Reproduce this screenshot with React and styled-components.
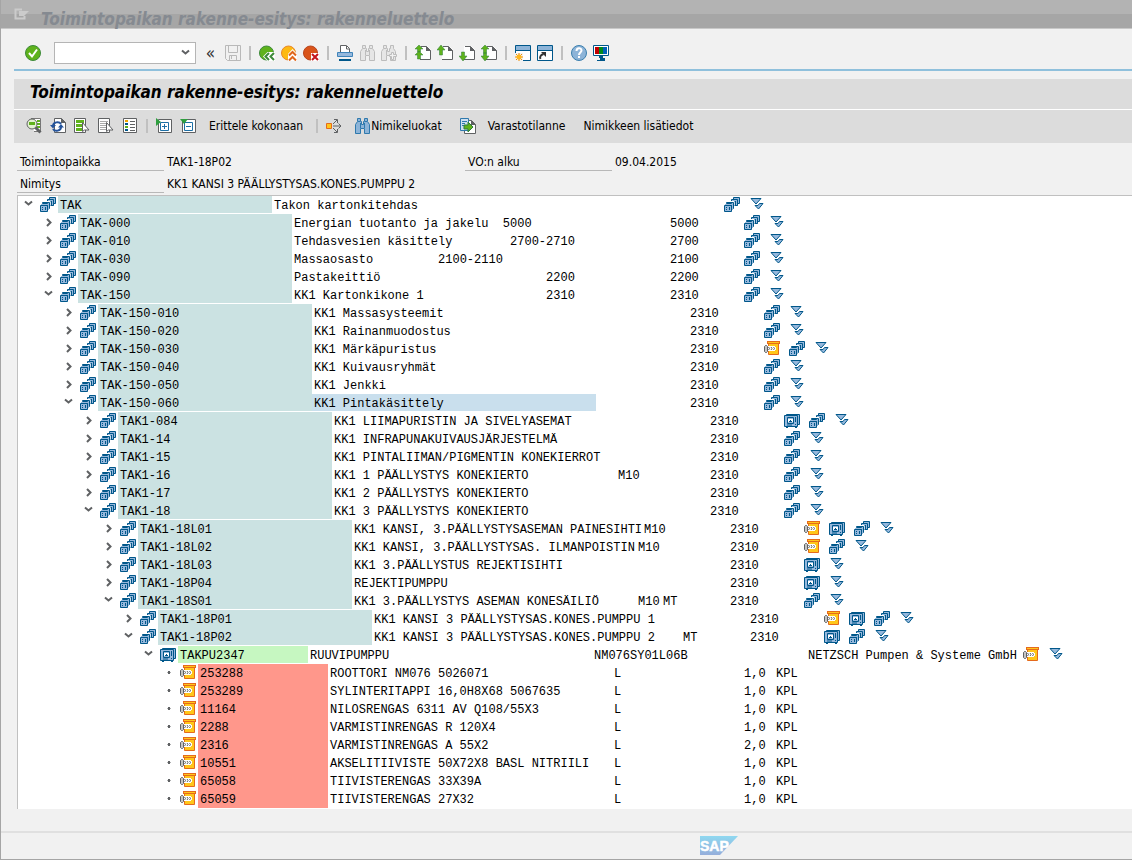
import React from 'react'
import styled, { createGlobalStyle, css } from 'styled-components'

const GlobalStyle = createGlobalStyle`
    * {
        box-sizing: border-box;
    }

    body {
        margin: 0;
        background-color: #f1f1f1;
        color: #000;
        font-family: "DejaVu Sans Condensed", Tahoma, sans-serif;
        font-size: 12px;
    }

    button, input {
        font: inherit;
        color: inherit;
    }

    svg {
        display: block;
        flex: none;
    }
`

const BLUE = '#00578a'
const LIGHT = '#96b8dc'
const GREEN = '#5fb21c'
const GREY = '#5f6163'

/* ---------- icons ---------- */

const Svg = ({ w = 16, h = 16, children }) => (
    <svg width={w} height={h} viewBox={`0 0 ${w} ${h}`} fill="none" aria-hidden="true">
        {children}
    </svg>
)

const Location = () => (
    <Svg h={15}>
        <path d="M9.5 .5h6v6h-6z" fill={LIGHT} stroke={BLUE} />
        <path d="M8 2h6v7H8z" fill={LIGHT} />
        <path d="M7.5 8.5v-6h6v6z" fill={LIGHT} stroke={BLUE} />
        <path d="M10 4.500h2M11.500 5v3" stroke={BLUE} />
        <path d="M3 4h7.500v7H3z" fill="#fff" />
        <path d="M2.500 6.500v-1h7v6h-2v-5z" fill={LIGHT} stroke={BLUE} />
        <path d="M1 7.500h7M8.500 7v6" stroke={LIGHT} />
        <path d="M.5 8.5h7v6h-7z" fill={LIGHT} stroke={BLUE} />
        <path d="M2 10h1v1H2zM2 12h1v1H2zM5 10h1v3H5z" fill={BLUE} />
    </Svg>
)

const Equipment = () => (
    <Svg h={15}>
        <path d="M2 14h2v1H2zM11 14h2v1h-2z" fill={BLUE} />
        <path d="M2.500 2.500v-1h13v10h-2" fill={LIGHT} stroke={BLUE} />
        <path d="M.5 2.500h13v11H.5z" fill={LIGHT} stroke={BLUE} />
        <path d="M3.500 4.500h6v6h-6z" fill={LIGHT} stroke={BLUE} />
        <path d="M4 6h5v3H4z" fill="#fff" />
        <path d="M6 7h1v1H6zM5 8h3v1H5z" fill={BLUE} />
        <path d="M11.500 4v5M11 11.500h1M3 12h5" stroke={BLUE} />
    </Svg>
)

const Material = () => (
    <Svg h={14}>
        <path d="M4.500 1.500h10v12h-10z" fill="#ffc61a" stroke="#e56a1c" />
        <path d="M3 0h13v3H3z" fill="#e56a1c" />
        <path d="M4 1h11v1H4z" fill="#ffc61a" />
        <path d="M2 5h9v1h1v3h-1v1H2z" fill="#fff" />
        <path d="M1.500 4.500h1l1 1v5l-1 1h-1l-1-1v-5z" fill="#c4c4c4" stroke={GREY} />
        <path d="M4.500 6l1 1.500-1 1.500M7 6l1 1.500L7 9M9.500 6l1 1.500-1 1.500" stroke={GREY} />
    </Svg>
)

const Expand = () => (
    <Svg w={14} h={14}>
        <path d="M13 6.500H9.500L8 8.500H5L8.500 12z" fill={LIGHT} stroke={BLUE} />
        <path d="M1 1.500h10L6 7z" fill={LIGHT} stroke={BLUE} />
    </Svg>
)

const ArrowRight = () => (
    <Svg w={9} h={9}>
        <path d="M3 1l3.500 3.500L3 8" stroke={GREY} strokeWidth="2" />
    </Svg>
)

const ArrowDown = () => (
    <Svg w={9} h={9}>
        <path d="M1 1.500l3.500 3L8 1.500" stroke={GREY} strokeWidth="2" />
    </Svg>
)

const Dot = () => (
    <Svg w={9} h={9}>
        <path d="M4 3h2v3H4zM3.500 4h3v1h-3z" fill={GREY} />
    </Svg>
)

const Enter = () => (
    <Svg>
        <circle cx="8" cy="8" r="7.500" fill={GREEN} stroke="#3d8a3a" />
        <path d="M4 8l3 3.500L12 4.500" stroke="#fff" strokeWidth="2" />
    </Svg>
)

const Save = () => (
    <Svg>
        <path d="M.5 .5h15v15h-13l-2-2z" stroke="#b9b9b9" />
        <path d="M3.500 1v6.500h9V1M4.500 15v-4.500h7V15M6.500 11v3" stroke="#b9b9b9" />
    </Svg>
)

const Back = () => (
    <Svg>
        <circle cx="7.500" cy="8" r="7" fill={GREEN} stroke="#3d8a3a" />
        <path d="M4 11.500L8.500 7H16v9H8.500z" fill="#fff" />
        <path d="M10 8l-3.500 3.500L10 15M15 8l-3.500 3.500L15 15" stroke="#3d8a3a" strokeWidth="2" />
    </Svg>
)

const Exit = () => (
    <Svg>
        <circle cx="7.500" cy="8" r="7" fill="#fdb913" stroke="#e8862a" />
        <path d="M7 9l4.500-5L16 9v7H7z" fill="#fff" />
        <path d="M8 10.500l3.500-3.500 3.500 3.500M8 15.500l3.500-3.500 3.500 3.500" stroke="#e0651b" strokeWidth="2" />
    </Svg>
)

const Cancel = () => (
    <Svg>
        <circle cx="7.500" cy="8" r="7" fill="#d9541a" stroke="#b8441c" />
        <path d="M8 8h8v8H8z" fill="#fff" />
        <path d="M9 9l6 6M15 9l-6 6" stroke="#c4161c" strokeWidth="2" />
    </Svg>
)

const Print = () => (
    <Svg>
        <path d="M3.500 7V.5h6l3 3V7" fill="#fff" stroke={GREY} />
        <path d="M9.500 1v3H12" stroke={GREY} />
        <path d="M.5 7.500h15v4H.5z" fill={LIGHT} stroke="#3f84ba" />
        <path d="M2 14h12v2H2z" fill={BLUE} />
    </Svg>
)

const Find = ({ line = '#bcbcbc', fill = '#e6e6e6' }) => (
    <Svg w={15}>
        <path d="M2.500 .5h3v3h1v3h2v-3h1v-3h3v3l2 3v9h-5v-5h-4v5h-5v-9l2-3z" fill={fill} stroke={line} />
        <path d="M5.500 5v5M9.500 5v5M3 3.500h2M10 3.500h2" stroke={line} />
    </Svg>
)

const FindNext = () => (
    <Svg>
        <path d="M2.500 .5h3v3h1v3h2v-3h1v-3h3v3l2 3v9h-5v-5h-4v5h-5v-9l2-3z" fill="#e6e6e6" stroke="#bcbcbc" />
        <path d="M5.500 5v5M3 3.500h2" stroke="#bcbcbc" />
        <path d="M10.500 7.500h2v2h3v2h-3v3h-2v-3h-2v-2h2z" fill="#f1f1f1" stroke="#bcbcbc" />
    </Svg>
)

const arrows = {
    first: 'M4 0l4 4H5.500v3h-3V4H0zM4 6l4 4H5.500v4h-3v-4H0z',
    prev: 'M4 0l4 5H5.500v5h-3V5H0z',
    next: 'M2.500 7h3v4H8l-4 5-4-5h2.500z',
    last: 'M4 0l4 4H5.500v4h-3V4H0zM2.500 8h3v3H8l-4 5-4-5h2.500z',
}

const PageArrow = ({ kind }) => (
    <Svg>
        <path d="M5 1h7l4 4v10H5z" fill="#fff" />
        <path d="M6 1.500h5.500l4 4v9H5" stroke={GREY} />
        <path d="M11 1v5h5z" fill={GREY} />
        <path d={arrows[kind]} fill={GREEN} stroke="#2e7d3c" strokeWidth=".5" />
    </Svg>
)

const NewSession = () => (
    <Svg>
        <path d="M.5 .5h15v15H.5z" fill="#fff" stroke={BLUE} />
        <path d="M1 1h14v4H1z" fill="#8db4d8" />
        <path d="M0 5h16v1H0z" fill={BLUE} />
        <path d="M0 8h8v8H0z" fill="#f1f1f1" />
        <path d="M4 8v8M0 12h8M1 9l6 6M7 9l-6 6" stroke="#f08c00" />
        <circle cx="4" cy="12" r="2.500" fill="#ffb81c" />
    </Svg>
)

const Shortcut = () => (
    <Svg>
        <path d="M.5 .5h15v15H.5z" fill="#fff" stroke={BLUE} />
        <path d="M1 1h14v4H1z" fill="#8db4d8" />
        <path d="M0 5h16v1H0z" fill={BLUE} />
        <path d="M3.500 14c-1-2 0-4 3-5" stroke="#333" strokeWidth="2" />
        <path d="M4 7h5v5z" fill="#333" />
    </Svg>
)

const Help = () => (
    <Svg>
        <circle cx="8" cy="8" r="7.500" fill="#8db4d8" stroke="#3b7fae" />
        <path d="M5.500 6c0-3.500 5-3.500 5-.5C10.500 7.500 8 7.500 8 10" stroke="#fff" strokeWidth="2" />
        <path d="M7 11h2v2H7z" fill="#fff" />
    </Svg>
)

const Monitor = () => (
    <Svg>
        <path d="M.5 .5h15v10H.5z" fill="#fff" stroke={BLUE} />
        <path d="M2 2h4v7H2z" fill="#c00000" />
        <path d="M6 2h4v7H6z" fill="#008a1e" />
        <path d="M10 2h4v7h-4z" fill="#0060b8" />
        <path d="M6 11h4v2h2v3H4v-1h3v-2H6z" fill={BLUE} />
    </Svg>
)

const Detail = () => (
    <Svg>
        <path d="M5 .5h9.500v13H8" fill="#fff" stroke="#777" />
        <path d="M11 3h3M11 6h3M11 9h3" stroke={GREEN} strokeWidth="2" />
        <circle cx="6" cy="6" r="5" fill="#e4f2d2" stroke={GREY} />
        <path d="M3 4h6v3H3z" fill={GREEN} />
        <path d="M9.500 9.500l5 5" stroke={GREY} strokeWidth="3" />
    </Svg>
)

const Refresh = () => (
    <Svg>
        <path d="M4.500 .5h7l4 4v10h-11z" fill="#fff" stroke={GREY} />
        <path d="M11 0v5h5z" fill={GREY} />
        <path d="M3 8c0-4 6-5 8-2M11 9c0 4-6 5-8 2" stroke="#24539b" strokeWidth="2" />
        <path d="M0 7h6L3 10.500zM8 9.500L11 6l3 3.500z" fill="#24539b" />
    </Svg>
)

const SelectAll = ({ on }) => (
    <Svg>
        <path d="M.5 .5h11v14H.5z" fill="#fff" stroke={GREY} />
        <path d="M2 3.500h8M2 7.500h6M2 11.500h6" stroke={on ? GREEN : '#aaa'} strokeWidth={on ? 3 : 1} />
        {!on && <path d="M2 5.500h8M2 9.500h6" stroke="#aaa" />}
        <path d="M8.500 4.500v9l2-1.500h4.500z" fill="#fff" stroke={GREY} />
    </Svg>
)

const Legend = () => (
    <Svg>
        <path d="M1.500 .5h13v14h-13z" fill="#fff" stroke={GREY} />
        <path d="M3 2h3v2H3z" fill="#f0a500" />
        <path d="M3 5h3v2H3z" fill={BLUE} />
        <path d="M3 8h3v2H3z" fill={GREEN} />
        <path d="M3 11h3v2H3z" fill={BLUE} />
        <path d="M8 3.500h5M8 6.500h5M8 9.500h5M8 12.500h5" stroke={GREY} />
    </Svg>
)

const TreeToggle = ({ open }) => (
    <Svg>
        <path d="M2.500 1.500h13v13h-13z" fill="#fff" stroke={GREY} />
        <path d="M4.500 4.500h8v8h-8z" fill="#fff" stroke="#1d6fa5" />
        <path d={open ? 'M6 8.500h5M8.500 6v5' : 'M6 8.500h5'} stroke="#1d6fa5" />
        <path d={open ? 'M0 0l5 4-5 4z' : 'M0 1h8L4 6z'} fill="#2f9e3f" />
    </Svg>
)

const WhereUsed = () => (
    <Svg>
        <path d="M.5 5.500h5v5h-5z" fill="#ffc61a" stroke="#e56a1c" />
        <path d="M7 8h8M12.500 5.500L15 8l-2.500 2.500M7 6l4-4M8 1.500h3.500V5M7 10l4 4M8 14.500h3.500V11" stroke={GREY} />
    </Svg>
)

const Transfer = () => (
    <Svg>
        <path d="M4.500 2.500h7l4 4v9h-11z" fill="#fff" stroke={GREY} />
        <path d="M11 2v5h5z" fill={GREY} />
        <path d="M.5 .5h8v12h-8z" fill="#cfe0f0" stroke="#2f79ad" />
        <path d="M2 3.500h5M2 5.500h3M2 7.500h2" stroke="#2f79ad" />
        <path d="M4 7h4V4l5 5-5 5v-3H4z" fill={GREEN} stroke="#2e7d3c" />
    </Svg>
)

const WindowIcon = () => (
    <Svg>
        <path d="M8 3.500H1.500v9h9V10" stroke="#cbcbcb" strokeWidth="2" />
        <path d="M5 5h10l-5 5H5z" fill="#cbcbcb" />
    </Svg>
)

const SapLogo = () => (
    <svg width="38" height="19" viewBox="0 0 38 19" role="img" aria-label="SAP">
        <defs>
            <linearGradient id="sap" x1="0" y1="0" x2="0" y2="1">
                <stop offset="0" stopColor="#8fd8f0" />
                <stop offset="1" stopColor="#95aedb" />
            </linearGradient>
        </defs>
        <path d="M0 0h38L20 19H0z" fill="url(#sap)" />
        <text x="0" y="15" fill="#fff" stroke="#fff" strokeWidth=".5" fontFamily="Liberation Sans, sans-serif" fontWeight="bold" fontSize="14">SAP</text>
    </svg>
)

/* ---------- data ---------- */

const L = Location
const E = Equipment
const M = Material

// [level, state, id, description, room, type, plant, trailing icons]
const locations = [
    [0, 'open', 'TAK', 'Takon kartonkitehdas', '', '', '', [L]],
    [1, 'closed', 'TAK-000', 'Energian tuotanto ja jakelu  5000', '', '', '5000', [L]],
    [1, 'closed', 'TAK-010', 'Tehdasvesien käsittely        2700-2710', '', '', '2700', [L]],
    [1, 'closed', 'TAK-030', 'Massaosasto         2100-2110', '', '', '2100', [L]],
    [1, 'closed', 'TAK-090', 'Pastakeittiö                       2200', '', '', '2200', [L]],
    [1, 'open', 'TAK-150', 'KK1 Kartonkikone 1                 2310', '', '', '2310', [L]],
    [2, 'closed', 'TAK-150-010', 'KK1 Massasysteemit', '', '', '2310', [L]],
    [2, 'closed', 'TAK-150-020', 'KK1 Rainanmuodostus', '', '', '2310', [L]],
    [2, 'closed', 'TAK-150-030', 'KK1 Märkäpuristus', '', '', '2310', [M, L]],
    [2, 'closed', 'TAK-150-040', 'KK1 Kuivausryhmät', '', '', '2310', [L]],
    [2, 'closed', 'TAK-150-050', 'KK1 Jenkki', '', '', '2310', [L]],
    [2, 'open', 'TAK-150-060', 'KK1 Pintakäsittely', '', '', '2310', [L]],
    [3, 'closed', 'TAK1-084', 'KK1 LIIMAPURISTIN JA SIVELYASEMAT', '', '', '2310', [E, L]],
    [3, 'closed', 'TAK1-14', 'KK1 INFRAPUNAKUIVAUSJÄRJESTELMÄ', '', '', '2310', [L]],
    [3, 'closed', 'TAK1-15', 'KK1 PINTALIIMAN/PIGMENTIN KONEKIERROT', '', '', '2310', [L]],
    [3, 'closed', 'TAK1-16', 'KK1 1 PÄÄLLYSTYS KONEKIERTO', 'M10', '', '2310', [L]],
    [3, 'closed', 'TAK1-17', 'KK1 2 PÄÄLLYSTYS KONEKIERTO', '', '', '2310', [L]],
    [3, 'open', 'TAK1-18', 'KK1 3 PÄÄLLYSTYS KONEKIERTO', '', '', '2310', [L]],
    [4, 'closed', 'TAK1-18L01', 'KK1 KANSI, 3.PÄÄLLYSTYSASEMAN PAINESIHTI', 'M10', '', '2310', [M, E, L]],
    [4, 'closed', 'TAK1-18L02', 'KK1 KANSI, 3.PÄÄLLYSTYSAS. ILMANPOISTIN', 'M10', '', '2310', [M, L]],
    [4, 'closed', 'TAK1-18L03', 'KK1 3.PÄÄLLYSTUS REJEKTISIHTI', '', '', '2310', [E]],
    [4, 'closed', 'TAK1-18P04', 'REJEKTIPUMPPU', '', '', '2310', [E]],
    [4, 'open', 'TAK1-18S01', 'KK1 3.PÄÄLLYSTYS ASEMAN KONESÄILIÖ', 'M10', 'MT', '2310', [L]],
    [5, 'closed', 'TAK1-18P01', 'KK1 KANSI 3 PÄÄLLYSTYSAS.KONES.PUMPPU 1', '', '', '2310', [M, E, L]],
    [5, 'open', 'TAK1-18P02', 'KK1 KANSI 3 PÄÄLLYSTYSAS.KONES.PUMPPU 2', '', 'MT', '2310', [E, L]],
]

const selectedId = 'TAK-150-060'

const parts = [
    ['253288', 'ROOTTORI NM076 5026071', '1,0'],
    ['253289', 'SYLINTERITAPPI 16,0H8X68 5067635', '1,0'],
    ['11164', 'NILOSRENGAS 6311 AV Q108/55X3', '1,0'],
    ['2288', 'VARMISTINRENGAS R 120X4', '1,0'],
    ['2316', 'VARMISTINRENGAS A 55X2', '2,0'],
    ['10551', 'AKSELITIIVISTE 50X72X8 BASL NITRIILI', '1,0'],
    ['65058', 'TIIVISTERENGAS 33X39A', '1,0'],
    ['65059', 'TIIVISTERENGAS 27X32', '1,0'],
]

/* ---------- page ---------- */

const App = () => {
    return (
        <Page>
            <GlobalStyle />
            <TitleBar>
                <WindowIcon />
                <WindowTitle>Toimintopaikan rakenne-esitys: rakenneluettelo</WindowTitle>
            </TitleBar>

            <SystemBar>
                <IconButton aria-label="Enter"><Enter /></IconButton>
                <CommandBox>
                    <CommandInput aria-label="Komento" />
                    <CommandArrow aria-label="Historia"><ArrowDown /></CommandArrow>
                </CommandBox>
                <Collapse>«</Collapse>
                <IconButton aria-label="Tallenna"><Save /></IconButton>
                <Separator $space={2} />
                <IconButton aria-label="Takaisin"><Back /></IconButton>
                <IconButton aria-label="Lopeta"><Exit /></IconButton>
                <IconButton aria-label="Peruuta"><Cancel /></IconButton>
                <Separator $space={2} />
                <IconButton aria-label="Tulosta"><Print /></IconButton>
                <IconButton aria-label="Etsi"><Find /></IconButton>
                <IconButton aria-label="Etsi seuraava"><FindNext /></IconButton>
                <Separator $space={2} />
                <IconButton aria-label="Ensimmäinen sivu"><PageArrow kind="first" /></IconButton>
                <IconButton aria-label="Edellinen sivu"><PageArrow kind="prev" /></IconButton>
                <IconButton aria-label="Seuraava sivu"><PageArrow kind="next" /></IconButton>
                <IconButton aria-label="Viimeinen sivu"><PageArrow kind="last" /></IconButton>
                <Separator $space={2} />
                <IconButton aria-label="Uusi istunto"><NewSession /></IconButton>
                <IconButton aria-label="Pikakuvake"><Shortcut /></IconButton>
                <Separator $space={2} />
                <IconButton aria-label="Ohje"><Help /></IconButton>
                <IconButton aria-label="Asettelu"><Monitor /></IconButton>
            </SystemBar>

            <Heading>Toimintopaikan rakenne-esitys: rakenneluettelo</Heading>

            <AppBar>
                <IconButton aria-label="Yksityiskohdat"><Detail /></IconButton>
                <IconButton aria-label="Päivitä"><Refresh /></IconButton>
                <IconButton aria-label="Valitse kaikki"><SelectAll on /></IconButton>
                <IconButton aria-label="Poista valinnat"><SelectAll /></IconButton>
                <IconButton aria-label="Selite"><Legend /></IconButton>
                <Separator />
                <IconButton aria-label="Avaa"><TreeToggle open /></IconButton>
                <IconButton aria-label="Sulje"><TreeToggle /></IconButton>
                <TextButton>Erittele kokonaan</TextButton>
                <Separator />
                <IconButton aria-label="Käyttöpaikat"><WhereUsed /></IconButton>
                <LabelButton $gap={1}><Find line="#2f79ad" fill="#8db4d8" />Nimikeluokat</LabelButton>
                <LabelButton $gap={12}><Transfer />Varastotilanne</LabelButton>
                <TextButton>Nimikkeen lisätiedot</TextButton>
            </AppBar>

            <Header>
                <Label htmlFor="paikka">Toimintopaikka</Label>
                <Value id="paikka">TAK1-18P02</Value>
                <Label htmlFor="alku">VO:n alku</Label>
                <Value id="alku">09.04.2015</Value>
                <Label htmlFor="nimitys">Nimitys</Label>
                <Value id="nimitys">KK1 KANSI 3 PÄÄLLYSTYSAS.KONES.PUMPPU 2</Value>
            </Header>

            <Tree role="tree">
                {locations.map(([level, state, id, text, room, type, plant, icons], i) => {
                    const next = locations[i + 1]
                    return (
                        <Row key={id} role="treeitem" $level={level}>
                            <Toggle aria-label={id}>{state === 'open' ? <ArrowDown /> : <ArrowRight />}</Toggle>
                            <NodeIcon><Location /></NodeIcon>
                            <Key $last={!next || next[0] !== level}>{id}</Key>
                            <Description>
                                <Text $selected={id === selectedId}>{text}</Text>
                                <Room>{room}</Room>
                            </Description>
                            <Type>{type}</Type>
                            <Plant>{plant}</Plant>
                            <Actions icons={icons} />
                        </Row>
                    )
                })}
                <Row role="treeitem" $level={6}>
                    <Toggle aria-label="TAKPU2347"><ArrowDown /></Toggle>
                    <NodeIcon><Equipment /></NodeIcon>
                    <Key $kind="equipment" $last>TAKPU2347</Key>
                    <Text>RUUVIPUMPPU</Text>
                    <Model>NM076SY01L06B</Model>
                    <Maker>NETZSCH Pumpen &amp; Systeme GmbH</Maker>
                    <Actions icons={[M]} />
                </Row>
                {parts.map(([id, text, qty]) => (
                    <Row key={id} role="treeitem" $level={7}>
                        <Leaf><Dot /></Leaf>
                        <NodeIcon><Material /></NodeIcon>
                        <Key $kind="material">{id}</Key>
                        <Text>{text}</Text>
                        <Category>L</Category>
                        <Quantity>{qty}</Quantity>
                        <Unit>KPL</Unit>
                    </Row>
                ))}
            </Tree>

            <Footer>
                <SapLogo />
            </Footer>
        </Page>
    )
}

const Actions = ({ icons }) => (
    <ActionList>
        {icons.map((Icon, i) => (
            <IconButton key={i} aria-label="Näytä"><Icon /></IconButton>
        ))}
        <IconButton aria-label="Laajenna"><Expand /></IconButton>
    </ActionList>
)

export default App

const Page = styled.div`
    display: flex;
    flex-direction: column;
    min-height: 100vh;
    border-left: 1px solid #a5a5a5;
    border-bottom: 1px solid #a5a5a5;
`

const TitleBar = styled.header`
    display: flex;
    align-items: flex-start;
    gap: 11px;
    height: 29px;
    padding: 6px 13px 0;
    background: linear-gradient(#b3b3b3 50%, #a6a6a6 50%);
    border-bottom: 1px solid #c8c8c8;
`

const titleFont = css`
    font-size: 17px;
    font-weight: bold;
    font-style: italic;
    line-height: 20px;
    white-space: nowrap;
`

const WindowTitle = styled.span`
    ${titleFont}
    margin-top: 3px;
    color: #858a91;
`

const SystemBar = styled.div`
    display: flex;
    align-items: center;
    gap: 6px;
    height: 42px;
    margin-left: 13px;
    padding: 10px 11px 2px;
    border-bottom: 2px solid #8fc0dc;
`

const IconButton = styled.button`
    display: flex;
    align-items: flex-start;
    justify-content: center;
    flex: none;
    min-width: 16px;
    height: 16px;
    padding: 0;
    border: 0;
    background: none;
    cursor: pointer;
`

const CommandBox = styled.div`
    display: flex;
    align-items: center;
    width: 142px;
    height: 22px;
    margin-left: 7px;
    border: 1px solid #b5b5b5;
    background-color: white;
`

const CommandInput = styled.input`
    flex: 1;
    min-width: 0;
    border: 0;
    background: none;
    outline: none;
`

const CommandArrow = styled(IconButton)`
    align-items: center;
    width: 20px;
`

const Collapse = styled.button`
    width: 17px;
    height: 20px;
    padding: 0;
    border: 0;
    background: none;
    color: #333;
    font-size: 17px;
    line-height: 16px;
    cursor: pointer;
`

const Separator = styled.span`
    flex: none;
    width: 2px;
    height: 14px;
    margin: 0 ${props => props.$space || 0}px;
    background-color: #c0c0c0;
`

const Heading = styled.h1`
    ${titleFont}
    margin: 8px 0 0 13px;
    padding: 3px 16px 7px;
    background-color: #dcdcdc;
    border-bottom: 1px solid white;
`

const AppBar = styled.div`
    display: flex;
    align-items: center;
    gap: 8px;
    height: 33px;
    margin-left: 13px;
    padding: 0 12px 2px;
    background-color: #dcdcdc;
`

const TextButton = styled.button`
    padding: 0 5px;
    border: 0;
    background: none;
    white-space: nowrap;
    cursor: pointer;
`

const LabelButton = styled(TextButton)`
    display: flex;
    align-items: center;
    gap: ${props => props.$gap}px;
`

const Header = styled.div`
    display: grid;
    grid-template-columns: 147px 301px 147px 1fr;
    row-gap: 2px;
    margin: 8px 0 2px 16px;
`

const Label = styled.label`
    height: 20px;
    padding: 1px 0 0 3px;
    border-bottom: 1px solid #b8b8b8;
    line-height: 20px;
`

const Value = styled.output`
    height: 20px;
    padding: 1px 0 0 3px;
    line-height: 20px;
    white-space: nowrap;
`

const Tree = styled.div`
    margin-left: 16px;
    padding-bottom: 1px;
    border-top: 1px solid #c0c0c0;
    border-left: 1px solid #c0c0c0;
    background-color: white;
    font-family: "Liberation Mono", "Courier New", monospace;
    font-size: 12px;
    line-height: 18px;
    overflow: hidden;
`

const Row = styled.div`
    display: flex;
    height: 18px;
    padding-left: ${props => 6 + props.$level * 20}px;
    white-space: pre;

    > * {
        flex: none;
        padding-top: 1px;
    }
`

const Toggle = styled.button`
    display: flex;
    align-items: flex-start;
    width: 16px;
    padding: 0;
    border: 0;
    background: none;
    cursor: pointer;

    svg {
        margin-top: 4px;
    }
`

const Leaf = styled(Toggle).attrs({ as: 'span' })`
    cursor: default;
`

const NodeIcon = styled.span`
    display: flex;
    align-items: flex-start;
    width: 18px;
`

const keyColors = {
    location: '#cbe2e2',
    equipment: '#c6f7c1',
    material: '#ff978b',
}

const Key = styled.span`
    width: ${props => (props.$kind ? 130 : 214)}px;
    height: ${props => (props.$last ? 17 : 18)}px;
    padding-left: 2px;
    background-color: ${props => keyColors[props.$kind || 'location']};
`

const Description = styled.span`
    display: flex;
    width: 311px;
    height: 17px;

    && {
        padding-top: 0;
    }

    > * {
        padding-top: 1px;
    }
`

const Text = styled.span`
    flex: none;
    min-width: 284px;
    height: 17px;
    padding-left: 2px;
    background-color: ${props => (props.$selected ? '#c9dfed' : 'transparent')};
`

const Room = styled.span`
    padding-left: 2px;
`

const Type = styled.span`
    width: 67px;
`

const Plant = styled.span`
    width: 74px;
`

const Model = styled.span`
    width: 216px;
    padding-left: 2px;
`

const Maker = styled.span`
    width: 215px;
`

const Category = styled.span`
    width: 132px;
    padding-left: 2px;
`

const Quantity = styled.span`
    width: 32px;
`

const Unit = styled.span`
    width: 40px;
`

const ActionList = styled.span`
    display: flex;
    align-items: flex-start;
    gap: 9px;
`

const Footer = styled.footer`
    margin-top: 22px;
    padding: 3px 16px 4px 699px;
    border-top: 2px solid #e0e0e0;
`
